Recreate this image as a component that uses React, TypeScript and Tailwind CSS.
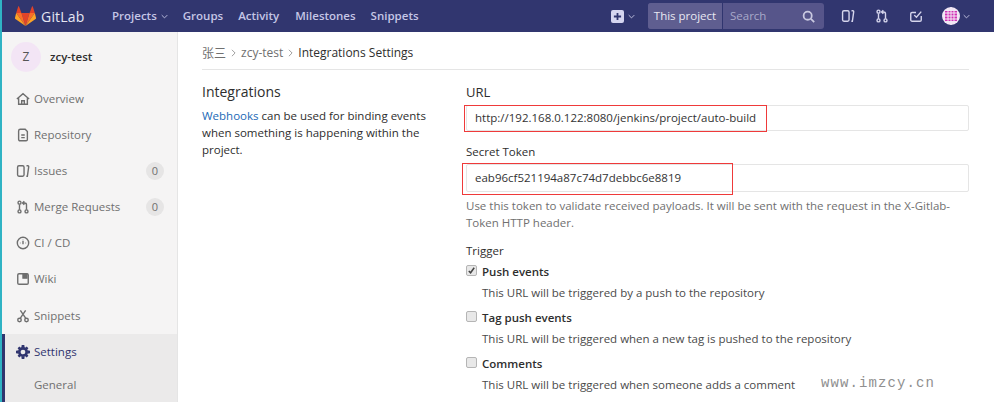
import React from "react";

const I = ({ children, className = "" }: { children: React.ReactNode; className?: string }) => (
  <svg viewBox="0 0 16 16" fill="none" stroke="currentColor" strokeWidth="1.6" className={className}>{children}</svg>
);

const Issues = ({ className }: { className?: string }) => (
  <I className={className}>
    <rect x="1.8" y="2" width="7.4" height="12" rx="1.6" />
    <path d="M12 2h1.6c.8 0 1 .6.9 1.200L13 14h-1.200" />
  </I>
);
const MR = ({ className }: { className?: string }) => (
  <I className={className}>
    <circle cx="4" cy="3" r="1.700" />
    <circle cx="4" cy="13" r="1.700" />
    <circle cx="12" cy="13" r="1.700" />
    <path d="M4 5v6M12 11V5.500C12 4 11 3.500 9.500 3.500H8M9.500 1.500 7.500 3.500l2 2" />
  </I>
);

const items: { label: string; badge?: string; icon: React.ReactNode; cls: string }[] = [
  {
    label: "Overview",
    cls: "h-[36px]",
    icon: (
      <I className="w-[14px] h-[14px]">
        <path d="M1 8 8 2l7 6M3 7v7h10V7M6.500 14v-4h3v4" />
      </I>
    ),
  },
  {
    label: "Repository",
    cls: "h-[36px]",
    icon: (
      <I className="w-[14px] h-[14px]">
        <path d="M3 3.500C3 2 4 1.500 5 1.500h5.500L13 4v9c0 1-.7 1.500-1.500 1.500h-7C3.700 14.500 3 14 3 13zM6 8h4M6 11h4" />
      </I>
    ),
  },
  { label: "Issues", badge: "0", cls: "h-[36px]", icon: <Issues className="w-[14px] h-[14px]" /> },
  { label: "Merge Requests", badge: "0", cls: "h-[36px]", icon: <MR className="w-[14px] h-[14px]" /> },
  {
    label: "CI / CD",
    cls: "h-[36px]",
    icon: (
      <I className="w-[14px] h-[14px]">
        <circle cx="8" cy="8" r="6.500" />
        <path d="M8 5.500v4M4.500 8h.5M11 8h.5M8 3.800v.3" />
      </I>
    ),
  },
  {
    label: "Wiki",
    cls: "h-[36px]",
    icon: (
      <I className="w-[14px] h-[14px]">
        <rect x="2" y="2" width="12" height="12" rx="1.500" />
        <path d="M8 2.500h4.500v4.500H8z" fill="currentColor" />
      </I>
    ),
  },
  {
    label: "Snippets",
    cls: "h-[37px]",
    icon: (
      <I className="w-[14px] h-[14px]">
        <circle cx="4" cy="12.500" r="2" />
        <circle cx="12" cy="12.500" r="2" />
        <path d="M5 10.500 11 1.500M11 10.500 5 1.500" />
      </I>
    ),
  },
];

const Check = ({ checked, title, desc }: { checked?: boolean; title: string; desc: string }) => (
  <div className="mb-[4px]">
    <div className="flex items-center h-[21px]">
      <span className="w-[11px] h-[11px] rounded-[2px] border border-[#b5b5b5] bg-[#e8e8e8] flex items-center justify-center mr-[5px] mt-[-3px]">
        {checked && (
          <svg viewBox="0 0 10 10" className="w-[9px] h-[9px]">
            <path d="M2 5.500 4 7.500 8 2" fill="none" stroke="#444" strokeWidth="1.700" />
          </svg>
        )}
      </span>
      <span className="font-semibold text-[#2e2e2e]">{title}</span>
    </div>
    <div className="h-[21px] leading-[21px] pl-[16px] text-[#4a4a4a]">{desc}</div>
  </div>
);

export default function App() {
  return (
    <div className="w-[994px] h-[402px] overflow-hidden bg-white flex flex-col border-l-2 border-[#2fb3c4] font-['Open_Sans','Noto_Sans',sans-serif] text-[11.5px]">
      <header className="h-[32px] shrink-0 bg-[#31366f] flex items-center text-[#c8c9e6]">
        <svg viewBox="0 0 36 34" className="w-[21px] h-[20px] ml-[13px]">
          <path d="M18 34 25 12H11z" fill="#e24329" />
          <path d="M18 34 11 12H2z" fill="#fc6d26" />
          <path d="M2 12 0 20c-.2.800 0 1.500.700 2L18 34z" fill="#fca326" />
          <path d="M2 12h9L7 1c-.3-.8-1.300-.8-1.600 0z" fill="#e24329" />
          <path d="M18 34l7-22h9z" fill="#fc6d26" />
          <path d="M34 12l2 8c.2.800 0 1.500-.7 2L18 34z" fill="#fca326" />
          <path d="M34 12h-9l4-11c.3-.8 1.300-.8 1.600 0z" fill="#e24329" />
        </svg>
        <span className="ml-[5px] w-[50px] text-[14px] tracking-[0.2px] text-[#e6e6f2]">GitLab</span>
        <nav className="flex items-center ml-[21px] font-semibold text-[#c5c6e6]">
          <span>Projects</span>
          <svg viewBox="0 0 10 6" className="w-[7px] h-[5px] ml-[4px]"><path d="M1 1l4 4 4-4" fill="none" stroke="currentColor" strokeWidth="1.300" /></svg>
          <span className="ml-[15px]">Groups</span>
          <span className="ml-[15px]">Activity</span>
          <span className="ml-[16px]">Milestones</span>
          <span className="ml-[15px]">Snippets</span>
        </nav>
        <div className="ml-auto flex items-center">
          <span className="w-[13px] h-[13px] rounded-[2px] bg-[#d5d5f0] flex items-center justify-center">
            <svg viewBox="0 0 10 10" className="w-[9px] h-[9px]"><path d="M5 1v8M1 5h8" stroke="#30356f" strokeWidth="2" /></svg>
          </span>
          <svg viewBox="0 0 10 6" className="w-[7px] h-[5px] ml-[4px] mr-[13px]"><path d="M1 1l4 4 4-4" fill="none" stroke="currentColor" strokeWidth="1.300" /></svg>
          <div className="flex h-[26px] w-[176px] rounded-[3px] bg-[#56558a]">
            <span className="w-[75px] bg-[#5f5e90] border-r border-[#30356f] rounded-l-[3px] flex items-center justify-center text-[#e8e8f2] font-medium">This project</span>
            <span className="flex-1 flex items-center pl-[7px] text-[#a9a9c9]">Search</span>
            <svg viewBox="0 0 16 16" fill="none" stroke="#c9c9e0" strokeWidth="2.200" className="w-[13px] h-[13px] self-center mr-[9px]">
              <circle cx="7" cy="7" r="5" /><path d="M11 11l4 4" />
            </svg>
          </div>
          <Issues className="w-[14px] h-[14px] ml-[17px] text-[#d5d5ec]" />
          <MR className="w-[14px] h-[14px] ml-[20px] text-[#d5d5ec]" />
          <I className="w-[14px] h-[14px] ml-[20px] text-[#d5d5ec]">
            <path d="M14 8v4.500c0 .8-.6 1.500-1.500 1.500h-9C2.700 14 2 13.300 2 12.500v-7C2 4.700 2.700 4 3.500 4H8M6 7l2.500 2.500L14 3" />
          </I>
          <svg viewBox="0 0 18 18" className="w-[18px] h-[18px] ml-[19px]">
            <defs><clipPath id="av"><circle cx="9" cy="9" r="9" /></clipPath></defs>
            <circle cx="9" cy="9" r="9" fill="#f0e4f3" />
            <path d="M3 4h12v10H3z" fill="#d02fb4" />
            <path d="M6 1v16M9 0v18M12 1v16M1 6h16M1 9h16M1 12h16" stroke="#f4eaf6" strokeWidth="1" clipPath="url(#av)" />
          </svg>
          <svg viewBox="0 0 10 6" className="w-[7px] h-[5px] ml-[3px] mr-[24px]"><path d="M1 1l4 4 4-4" fill="none" stroke="currentColor" strokeWidth="1.300" /></svg>
        </div>
      </header>

      <div className="flex flex-1 min-h-0">
        <aside className="w-[176px] shrink-0 bg-[#f5f4f4] border-r border-[#e5e5e5] flex flex-col text-[#707070]">
          <div className="h-[49px] flex items-center pl-[9px]">
            <span className="w-[30px] h-[30px] rounded-full bg-[#f3e5f5] flex items-center justify-center text-[#555] text-[12px]">Z</span>
            <span className="ml-[9px] font-semibold text-[#2e2e2e]">zcy-test</span>
          </div>
          <div>
            {items.map((it) => (
              <div key={it.label} className={`flex items-center pl-[14px] pr-[13px] ${it.cls}`}>
                <span className="w-[14px] text-[#6e6e6e] flex">{it.icon}</span>
                <span className="ml-[4px]">{it.label}</span>
                {it.badge && (
                  <span className="ml-auto w-[18px] h-[18px] rounded-full bg-[#e6e5e5] flex items-center justify-center text-[11px]">{it.badge}</span>
                )}
              </div>
            ))}
          </div>
          <div className="flex-1 bg-[#ebeaea] border-l-[3px] border-[#30356f]">
            <div className="flex items-center h-[36px] pl-[11px] text-[#30356f] font-semibold">
              <svg viewBox="0 0 16 16" className="w-[14px] h-[14px]">
                <circle cx="8" cy="8" r="4.200" fill="none" stroke="#30356f" strokeWidth="3" />
                <path d="M6.500 0h3l.4 3h-3.800zM6.500 16h3l.4-3H6.100zM0 6.500v3l3 .4V6.100zM16 6.500v3l-3 .4V6.100zM1.800 3.800 3.800 1.800l2.200 2-2.200 2.200zM14.200 12.200l-2 2-2.200-2 2.200-2.200zM12.200 1.800l2 2-2 2.200-2.200-2.200zM3.800 14.200l-2-2 2-2.200 2.200 2.200z" fill="#30356f" />
              </svg>
              <span className="ml-[4px] font-medium">Settings</span>
            </div>
            <div className="pl-[29px] h-[30px] flex items-center">General</div>
          </div>
        </aside>

        <main className="w-[792px] pl-[24px] shrink-0">
          <div className="h-[38px] w-[767px] border-b border-[#e5e5e5] flex items-center pt-[4px] text-[#707070]">
            <span className="font-['Noto_Sans_CJK_SC',sans-serif] text-[12px]">张三</span>
            <svg viewBox="0 0 6 10" className="w-[5px] h-[8px] mx-[5px]"><path d="M1 1l4 4-4 4" fill="none" stroke="#888" strokeWidth="1" /></svg>
            <span className="text-[12px]">zcy-test</span>
            <svg viewBox="0 0 6 10" className="w-[5px] h-[8px] mx-[5px]"><path d="M1 1l4 4-4 4" fill="none" stroke="#888" strokeWidth="1" /></svg>
            <span className="text-[#2e2e2e] font-medium text-[12px]">Integrations Settings</span>
          </div>
          <div className="flex pt-[11px]">
            <section className="w-[264px] shrink-0">
              <h4 className="text-[14px] leading-[22px] font-medium text-[#2e2e2e]">Integrations</h4>
              <p className="mt-[4px] w-[232px] leading-[17px] text-[#2e2e2e]">
                <span className="text-[#1b69b6]">Webhooks</span> can be used for binding events when something is happening within the project.
              </p>
            </section>
            <section className="w-[503px] text-[#2e2e2e]">
              <div className="font-medium text-[13px] leading-[22px]">URL</div>
              <div className="relative mt-[2px] h-[26px] border border-[#e5e5e5] rounded-[2px] flex items-center pl-[8px] text-[#333]">
                http://192.168.0.122:8080/jenkins/project/auto-build
                <span className="absolute left-[-3px] top-[-1px] w-[303px] h-[27px] border border-[color:#ef3a3a]" />
              </div>
              <div className="mt-[10px] font-medium leading-[22px]">Secret Token</div>
              <div className="relative mt-[1px] h-[28px] border border-[#e5e5e5] rounded-[2px] flex items-center pl-[8px] text-[#333]">
                eab96cf521194a87c74d7debbc6e8819
                <span className="absolute left-[-5px] top-[-2px] w-[271px] h-[32px] border border-[color:#ef3a3a]" />
              </div>
              <p className="mt-[5px] leading-[17px] text-[#707070]">
                Use this token to validate received payloads. It will be sent with the request in the X-Gitlab-Token HTTP header.
              </p>
              <div className="mt-[11px] leading-[18px] font-medium">Trigger</div>
              <div className="mt-[1px]">
                <Check checked title="Push events" desc="This URL will be triggered by a push to the repository" />
                <Check title="Tag push events" desc="This URL will be triggered when a new tag is pushed to the repository" />
                <div className="relative">
                  <Check title="Comments" desc="This URL will be triggered when someone adds a comment" />
                  <span className="absolute left-[355px] top-[20px] font-['Liberation_Mono',monospace] text-[14px] text-[#8f8f8f] whitespace-nowrap tracking-[1.1px]">www.imzcy.cn</span>
                </div>
              </div>
            </section>
          </div>
        </main>
      </div>
    </div>
  );
}
